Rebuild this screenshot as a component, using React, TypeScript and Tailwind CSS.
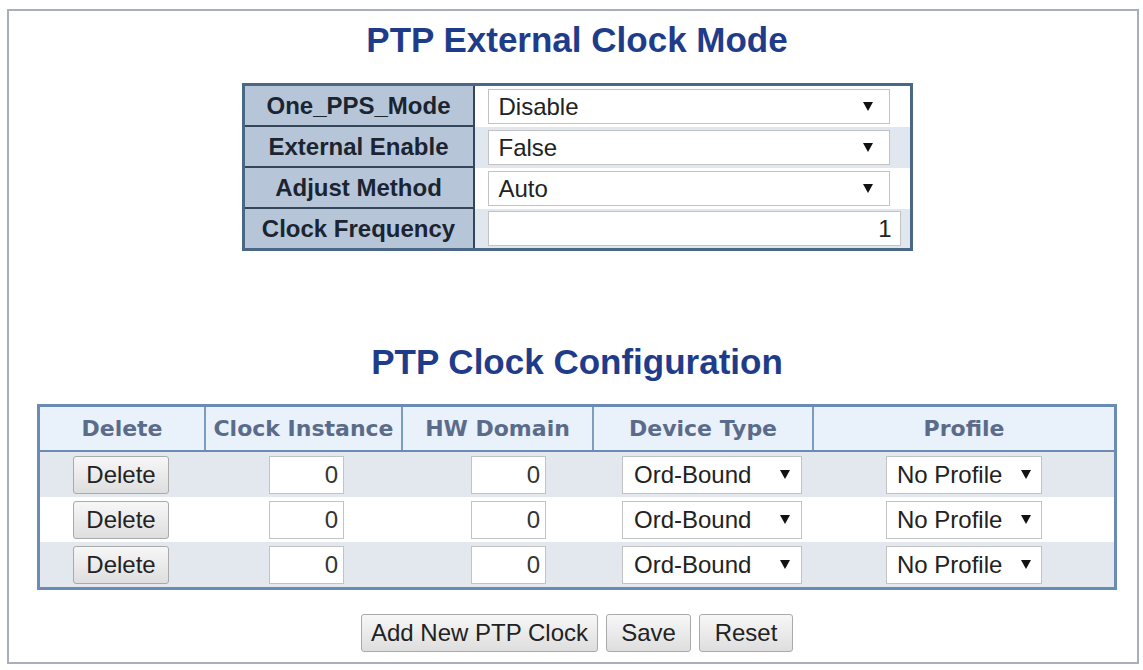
import React from "react";

const Arrow = () => (
  <svg width="10" height="9" viewBox="0 0 10 9" className="shrink-0">
    <polygon points="0,0 10,0 5,9" fill="#111" />
  </svg>
);

function Select({ value, w, pl, pr, h }: { value: string; w: string; pl: string; pr: string; h: string }) {
  return (
    <div className={`${w} ${h} ${pl} ${pr} flex items-center justify-between bg-white border border-[#c3c3c3] text-[24px] text-[#222]`}>
      <span>{value}</span>
      <Arrow />
    </div>
  );
}

function Btn({ children, w }: { children: React.ReactNode; w: string }) {
  return (
    <div className={`${w} h-[38px] flex items-center justify-center rounded-[3px] border border-[#aaaaaa] bg-gradient-to-b from-[#f7f7f7] to-[#dedede] text-[24px] text-[#222]`}>
      {children}
    </div>
  );
}

function TopRow({ label, last, alt, children }: { label: string; last?: boolean; alt?: boolean; children: React.ReactNode }) {
  return (
    <div className={`flex ${last ? "h-[39px]" : "h-[41px]"}`}>
      <div
        className={`w-[230px] shrink-0 bg-[#b6c6d8] border-r-2 border-[#34465a] ${last ? "" : "border-b-2"} flex items-center justify-center text-[24px] font-bold text-[#1b2430]`}
      >
        {label}
      </div>
      <div className={`flex-1 flex items-center pl-[13px] ${alt ? "bg-[#e1e7ee]" : "bg-white"}`}>{children}</div>
    </div>
  );
}

const cols = ["w-[166px]", "w-[197px]", "w-[191px]", "w-[220px]", "w-[300px]"];

function BodyRow({ alt }: { alt: boolean }) {
  return (
    <div className={`flex h-[45px] ${alt ? "bg-[#e2e8ee]" : "bg-white"}`}>
      <div className={`${cols[0]} flex items-center justify-center pr-[4px]`}>
        <Btn w="w-[96px]">Delete</Btn>
      </div>
      <div className={`${cols[1]} flex items-center justify-center pl-[4px]`}>
        <div className="w-[75px] h-[38px] bg-white border border-[#c3c3c3] flex items-center justify-end pr-[5px] text-[24px] text-[#333]">0</div>
      </div>
      <div className={`${cols[2]} flex items-center justify-center pl-[20px]`}>
        <div className="w-[75px] h-[38px] bg-white border border-[#c3c3c3] flex items-center justify-end pr-[5px] text-[24px] text-[#333]">0</div>
      </div>
      <div className={`${cols[3]} flex items-center justify-center pl-[16px]`}>
        <Select value="Ord-Bound" w="w-[180px]" h="h-[38px]" pl="pl-[11px]" pr="pr-[11px]" />
      </div>
      <div className={`${cols[4]} flex items-center justify-center`}>
        <Select value="No Profile" w="w-[156px]" h="h-[38px]" pl="pl-[10px]" pr="pr-[10px]" />
      </div>
    </div>
  );
}

export default function App() {
  const headers = ["Delete", "Clock Instance", "HW Domain", "Device Type", "Profile"];
  return (
    <div className="w-[1143px] h-[670px] bg-white pt-[9px] pl-[7px]" style={{ fontFamily: '"Liberation Sans", Arial, sans-serif' }}>
      <div className="w-[1132px] h-[655px] border-2 border-[#a6afbb] flex flex-col items-center pl-[8px]">
        <div className="mt-[9px] h-[40px] leading-[40px] text-[35px] font-bold text-[#1f3c8b]">PTP External Clock Mode</div>

        <div className="mt-[23px] w-[671px] border-[3px] border-[#4a6886] flex flex-col">
          <TopRow label="One_PPS_Mode">
            <Select value="Disable" w="w-[402px]" h="h-[35px]" pl="pl-[10px]" pr="pr-[16px]" />
          </TopRow>
          <TopRow label="External Enable" alt>
            <Select value="False" w="w-[402px]" h="h-[35px]" pl="pl-[10px]" pr="pr-[16px]" />
          </TopRow>
          <TopRow label="Adjust Method">
            <Select value="Auto" w="w-[402px]" h="h-[35px]" pl="pl-[10px]" pr="pr-[16px]" />
          </TopRow>
          <TopRow label="Clock Frequency" last alt>
            <div className="w-[413px] h-[35px] bg-white border border-[#c3c3c3] flex items-center justify-end pr-[8px] text-[24px] text-[#222]">1</div>
          </TopRow>
        </div>

        <div className="mt-[91px] h-[40px] leading-[40px] text-[35px] font-bold text-[#1f3c8b]">PTP Clock Configuration</div>

        <div className="mt-[22px] w-[1080px] border-[3px] border-[#6a8cb4] flex flex-col">
          <div className="flex h-[45px] bg-[#e9f1fb] border-b-2 border-[#6a8cb4]">
            {headers.map((h, i) => (
              <div
                key={h}
                className={`${cols[i]} flex items-center justify-center text-[22px] font-bold text-[#5b6c8a] ${i < 4 ? "border-r-2 border-[#7d9cc2]" : ""}`}
                style={{ fontFamily: '"DejaVu Sans", Verdana, sans-serif' }}
              >
                {h}
              </div>
            ))}
          </div>
          <BodyRow alt />
          <BodyRow alt={false} />
          <BodyRow alt />
        </div>

        <div className="mt-[24px] flex gap-[8px]">
          <Btn w="w-[237px]">Add New PTP Clock</Btn>
          <Btn w="w-[85px]">Save</Btn>
          <Btn w="w-[94px]">Reset</Btn>
        </div>
      </div>
    </div>
  );
}
